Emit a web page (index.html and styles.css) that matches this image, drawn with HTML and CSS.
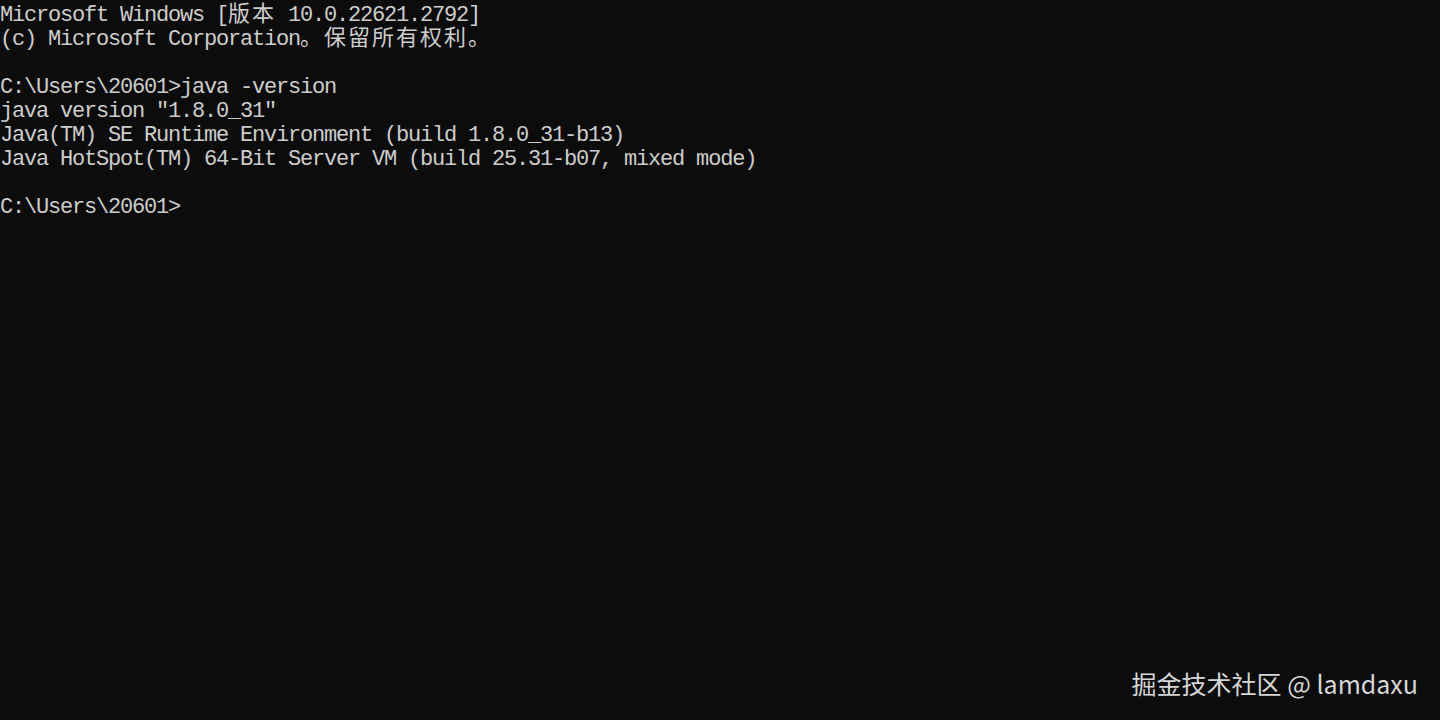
FILE: index.html
```html
<!DOCTYPE html>
<html lang="zh-CN">
<head>
<meta charset="utf-8">
<title>Command Prompt</title>
<link rel="stylesheet" href="styles.css">
</head>
<body>
<main class="terminal">
<div class="line">Microsoft Windows [<span class="cjk">版本</span> 10.0.22621.2792]</div>
<div class="line">(c) Microsoft Corporation<span class="cjk">。保留所有权利。</span></div>
<div class="line"> </div>
<div class="line">C:\Users\20601&gt;java -version</div>
<div class="line">java version "1.8.0_31"</div>
<div class="line">Java(TM) SE Runtime Environment (build 1.8.0_31-b13)</div>
<div class="line">Java HotSpot(TM) 64-Bit Server VM (build 25.31-b07, mixed mode)</div>
<div class="line"> </div>
<div class="line">C:\Users\20601&gt;</div>
</main>
<div class="watermark">掘金技术社区 @ lamdaxu</div>
</body>
</html>
```
FILE: styles.css
```css
html, body {
  margin: 0;
  padding: 0;
  background: #0c0c0c;
  width: 1440px;
  height: 720px;
  overflow: hidden;
}
body {
  position: relative;
}
.terminal {
  padding-top: 4px;
  color: #cccccc;
  font-family: "Liberation Mono", "Noto Sans CJK SC", monospace;
  font-size: 22px;
  letter-spacing: -1.2px;
  line-height: 24px;
}
.line {
  height: 24px;
  white-space: pre;
}
.cjk {
  letter-spacing: 2px;
}
.watermark {
  position: absolute;
  right: 22px;
  bottom: 25px;
  font-family: "Noto Sans CJK SC", "Noto Sans", sans-serif;
  font-size: 25px;
  line-height: 24px;
  color: #d6d6d6;
  white-space: nowrap;
}
```
